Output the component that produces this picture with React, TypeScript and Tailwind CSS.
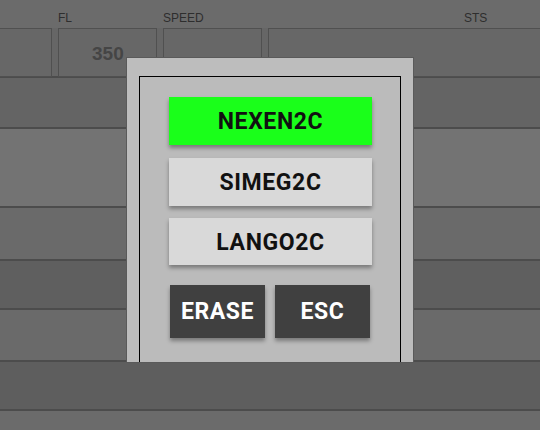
import React from "react";

const font = { fontFamily: "Roboto, 'Liberation Sans', Arial, sans-serif" };

export default function App() {
  return (
    <div className="relative w-[540px] h-[430px] overflow-hidden bg-[#6b6b6b]" style={font}>
      {/* header */}
      <div className="relative h-[28px] flex text-[12px] text-[#2e2e2e]" style={{ fontFamily: "'Liberation Sans', Arial, sans-serif" }}>
        <div className="w-[58px]" />
        <div className="w-[105px] pt-[9px]">FL</div>
        <div className="w-[105px] pt-[9px]">SPEED</div>
        <div className="flex-1 pt-[9px] pl-[196px]">STS</div>
      </div>
      {/* boxes row */}
      <div className="h-[50px] flex gap-[6px] bg-[#666666] border-b-2 border-[#4c4c4c]">
        <div className="w-[52px] h-[49px] border border-l-0 border-[#505050] bg-[#676767]" />
        <div className="w-[99px] h-[49px] border border-[#505050] bg-[#676767] flex items-center pl-[33px] pt-[3px] text-[19px] font-bold text-[#454545]" style={{ fontFamily: "'Liberation Sans', Arial, sans-serif" }}>350</div>
        <div className="w-[99px] h-[49px] border border-[#505050] bg-[#676767]" />
        <div className="flex-1 h-[49px] border border-r-0 border-[#505050] bg-[#676767]" />
      </div>
      <div className="h-[51px] bg-[#646464] border-b-2 border-[#4c4c4c]" />
      <div className="h-[79px] bg-[#737373] border-b-2 border-[#4c4c4c]" />
      <div className="h-[53px] bg-[#6a6a6a] border-b-2 border-[#4c4c4c]" />
      <div className="h-[49px] bg-[#5f5f5f] border-b-2 border-[#4c4c4c]" />
      <div className="h-[52px] bg-[#6a6a6a] border-b-2 border-[#4c4c4c]" />
      <div className="h-[49px] bg-[#5e5e5e] border-b-2 border-[#4c4c4c]" />
      <div className="h-[30px] bg-[#6b6b6b]" />

      {/* modal */}
      <div className="absolute left-[126px] top-[57px] w-[288px] h-[306px] bg-[#bdbdbd] border border-[#5a5a5a] pt-[18px] px-[12px] flex flex-col">
        <div className="flex-1 border border-b-0 border-black bg-[#bbbbbb] pt-[20px] pl-[29px] flex flex-col">
          <button className="w-[203px] h-[48px] pt-[3px] bg-[#1aff1a] text-[23px] tracking-[0.6px] font-bold text-[#111] shadow-[0_3px_4px_rgba(0,0,0,0.35)]">NEXEN2C</button>
          <button className="mt-[13px] w-[203px] h-[48px] pt-[3px] bg-[#d9d9d9] text-[23px] tracking-[0.6px] font-bold text-[#111] shadow-[0_3px_4px_rgba(0,0,0,0.35)]">SIMEG2C</button>
          <button className="mt-[12px] w-[203px] h-[47px] pt-[3px] bg-[#d9d9d9] text-[23px] tracking-[0.6px] font-bold text-[#111] shadow-[0_3px_4px_rgba(0,0,0,0.35)]">LANGO2C</button>
          <div className="mt-[20px] flex gap-[10px] pl-[1px]">
            <button className="w-[95px] h-[53px] pt-[2px] bg-[#404040] text-[23px] tracking-[0.6px] font-bold text-white shadow-[0_3px_4px_rgba(0,0,0,0.35)]">ERASE</button>
            <button className="w-[95px] h-[53px] pt-[2px] bg-[#404040] text-[23px] tracking-[0.6px] font-bold text-white shadow-[0_3px_4px_rgba(0,0,0,0.35)]">ESC</button>
          </div>
        </div>
      </div>
    </div>
  );
}
